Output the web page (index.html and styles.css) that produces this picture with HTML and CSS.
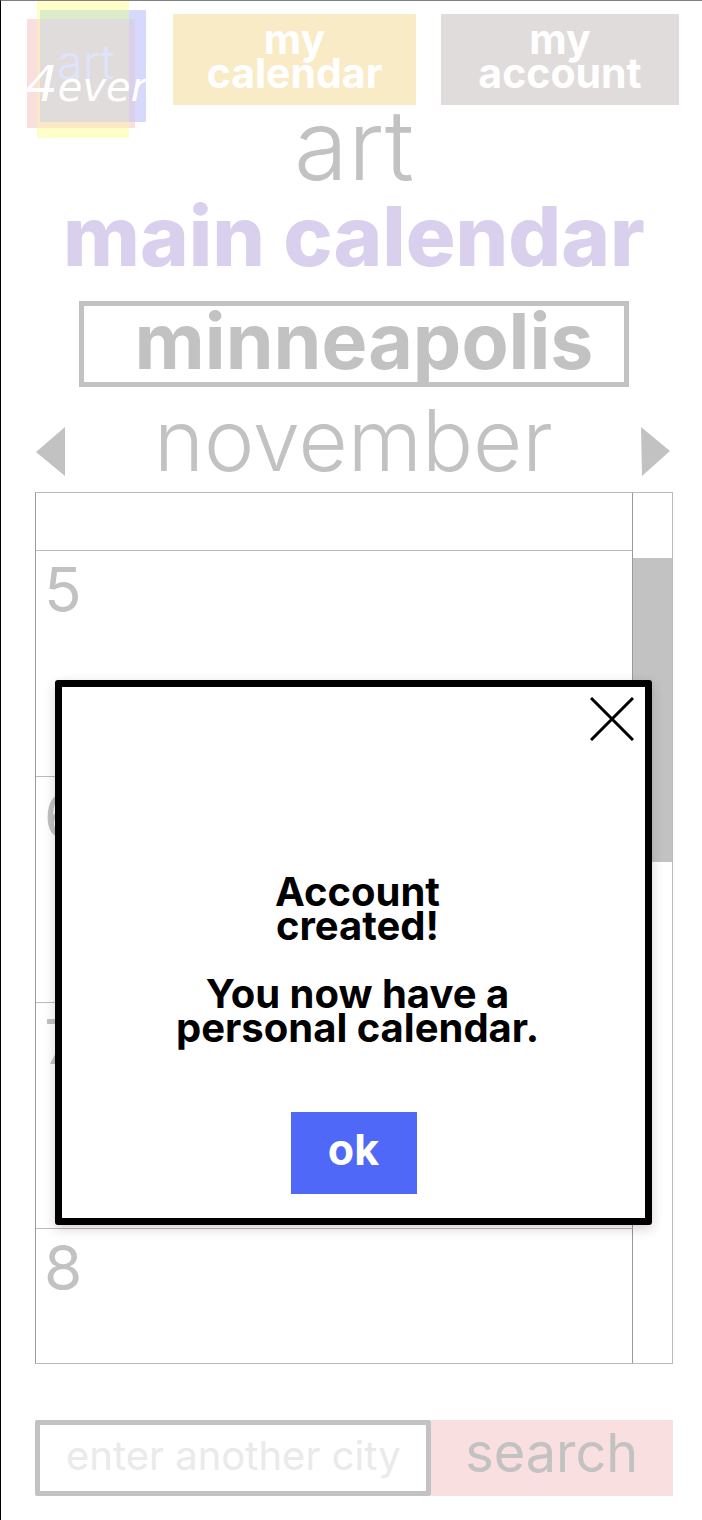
FILE: index.html
```
<!DOCTYPE html>
<html lang="en">
<head>
  <meta charset="utf-8">
  <meta name="viewport" content="width=device-width, initial-scale=1">
  <title>art 4ever – main calendar</title>
  <link rel="stylesheet" href="styles.css">
</head>
<body>
  <div class="page">
    <header class="header">
      <a class="logo" href="#" aria-label="art 4ever">
        <svg class="logo-art" viewBox="0 0 132 138" width="132" height="138" aria-hidden="true">
          <rect x="3" y="18" width="108" height="109" fill="#fadfdf"/>
          <rect x="16" y="9" width="106" height="112" fill="#d6d9fc"/>
          <rect x="13" y="0" width="92" height="137" fill="#feffc8"/>
          <rect x="16" y="9" width="89" height="9" fill="#dbecca"/>
          <rect x="13" y="18" width="92" height="109" fill="#fbe8c5"/>
          <rect x="105" y="18" width="6" height="103" fill="#dad0ec"/>
          <rect x="16" y="18" width="89" height="103" fill="#e0dcdc"/>
          <text class="logo-word" x="33" y="78">art</text>
          <text class="logo-script" x="2" y="100">4<tspan class="logo-script-small">ever</tspan></text>
        </svg>
      </a>
      <nav class="nav">
        <a class="nav-button nav-calendar" href="#">my<br>calendar</a>
        <a class="nav-button nav-account" href="#">my<br>account</a>
      </nav>
    </header>

    <main class="main">
      <p class="category">art</p>
      <h1 class="title">main calendar</h1>
      <h2 class="city">minneapolis</h2>
      <div class="month-bar">
        <button class="arrow" type="button" aria-label="previous month">
          <svg viewBox="0 0 30 50" width="30" height="50"><path d="M0 25 29 0V49Z" fill="#c2c2c2"/></svg>
        </button>
        <h3 class="month">november</h3>
        <button class="arrow" type="button" aria-label="next month">
          <svg viewBox="0 0 30 50" width="30" height="50"><path d="M0 0 29 24 1 49Z" fill="#c2c2c2"/></svg>
        </button>
      </div>

      <section class="calendar" aria-label="november days">
        <ol class="days">
          <li class="day day-partial"></li>
          <li class="day">5</li>
          <li class="day">6</li>
          <li class="day">7</li>
          <li class="day day-last">8</li>
        </ol>
        <div class="track"><div class="thumb"></div></div>
      </section>

      <form class="search">
        <input class="search-input" type="text" placeholder="enter another city" aria-label="enter another city">
        <button class="search-button" type="button">search</button>
      </form>
    </main>

    <section class="dialog" role="dialog" aria-label="Account created">
      <button class="close" type="button" aria-label="close">
        <svg viewBox="0 0 44 44" width="44" height="44"><path d="M1 1 43 43M43 1 1 43" stroke="#000" stroke-width="3"/></svg>
      </button>
      <p class="message">Account<br>created!</p>
      <p class="message">You now have a<br>personal calendar.</p>
      <button class="ok" type="button">ok</button>
    </section>
  </div>
</body>
</html>
```
FILE: styles.css
```
* {
  box-sizing: border-box;
}

body {
  margin: 0;
  background: #fff;
  color: #c2c2c2;
  font-family: Inter, "Liberation Sans", sans-serif;
}

h1, h2, h3, p, ol {
  margin: 0;
  padding: 0;
}

button {
  border: 0;
  padding: 0;
  background: none;
  font-family: inherit;
  cursor: pointer;
}

svg {
  display: block;
}

.page {
  position: relative;
  min-height: 100vh;
  padding: 0 22px 24px 24px;
  border-top: 1px solid #808080;
  border-left: 1px solid #000;
}

.header {
  display: flex;
  align-items: flex-start;
  gap: 17px;
}

.logo {
  margin: 0 0 -34px -1px;
}

.logo-art {
  overflow: visible;
}

.logo-word {
  fill: #dfe3fb;
  font-size: 47px;
  font-weight: 300;
}

.logo-script {
  fill: #fff;
  font-family: "DejaVu Sans", sans-serif;
  font-size: 50px;
  font-style: italic;
  font-weight: 200;
}

.logo-script-small {
  font-size: 40px;
}

.nav {
  flex: 1;
  display: flex;
  gap: 25px;
  padding: 13px 1px 0 0;
}

.nav-button {
  height: 91px;
  padding-top: 8px;
  color: #fff;
  font-size: 41px;
  font-weight: 700;
  line-height: 34px;
  text-align: center;
  text-decoration: none;
}

.nav-calendar {
  flex: 243;
  background: #faebc7;
}

.nav-account {
  flex: 238;
  background: #e1dcdc;
}

.main {
  padding: 0 7px 0 10px;
}

.category {
  font-size: 98px;
  font-weight: 300;
  line-height: 80px;
  text-align: center;
}

.title {
  color: #d9d0ed;
  font-size: 83px;
  font-weight: 800;
  line-height: 102px;
  text-align: center;
}

.city {
  margin: 14px 44px 0;
  padding: 0 0 6px 20px;
  border: 5px solid #c2c2c2;
  font-size: 77px;
  font-weight: 700;
  line-height: 70px;
  text-align: center;
}

.month-bar {
  display: flex;
  align-items: center;
  justify-content: space-between;
  margin: 12px 2px 9px 1px;
}

.arrow {
  padding-top: 22px;
}

.month {
  font-size: 85px;
  font-weight: 300;
  line-height: 84px;
}

.calendar {
  display: flex;
  border: 1px solid #bbb;
  border-left-color: #999;
}

.days {
  flex: 1;
  list-style: none;
}

.day {
  height: 226px;
  padding: 8px;
  border-bottom: 1px solid #bbb;
  font-size: 62px;
  font-weight: 400;
  line-height: 62px;
}

.day-partial {
  height: 58px;
}

.day-last {
  height: 134px;
  border-bottom: 0;
}

.track {
  width: 40px;
  padding-top: 65px;
  border-left: 1px solid #999;
}

.thumb {
  height: 304px;
  background: #c2c2c2;
}

.search {
  display: flex;
  height: 76px;
  margin-top: 56px;
}

.search-input {
  width: 62%;
  padding: 0 0 6px 26px;
  border: 5px solid #c2c2c2;
  border-radius: 2px;
  background: #fff;
  font-family: inherit;
  font-size: 40px;
  font-weight: 400;
}

.search-input::placeholder {
  color: #eaeaea;
  opacity: 1;
}

.search-button {
  flex: 1;
  padding-bottom: 12px;
  background: #f9dfdf;
  color: #c2c2c2;
  font-size: 54px;
  font-weight: 400;
}

.dialog {
  position: absolute;
  top: 679px;
  right: 50px;
  left: 54px;
  display: flex;
  flex-direction: column;
  align-items: center;
  gap: 34px;
  padding: 10px 11px 24px;
  border: 7px solid #000;
  border-radius: 3px;
  background: #fff;
  box-shadow: 0 4px 12px rgba(60, 30, 30, 0.2);
  color: #000;
}

.close {
  align-self: flex-end;
  margin-bottom: 100px;
}

.message {
  padding-left: 8px;
  font-size: 40px;
  font-weight: 700;
  line-height: 34px;
  text-align: center;
}

.ok {
  width: 126px;
  height: 82px;
  margin-top: 33px;
  padding-bottom: 8px;
  background: #5068f7;
  color: #fff;
  font-size: 43px;
  font-weight: 700;
}
```
